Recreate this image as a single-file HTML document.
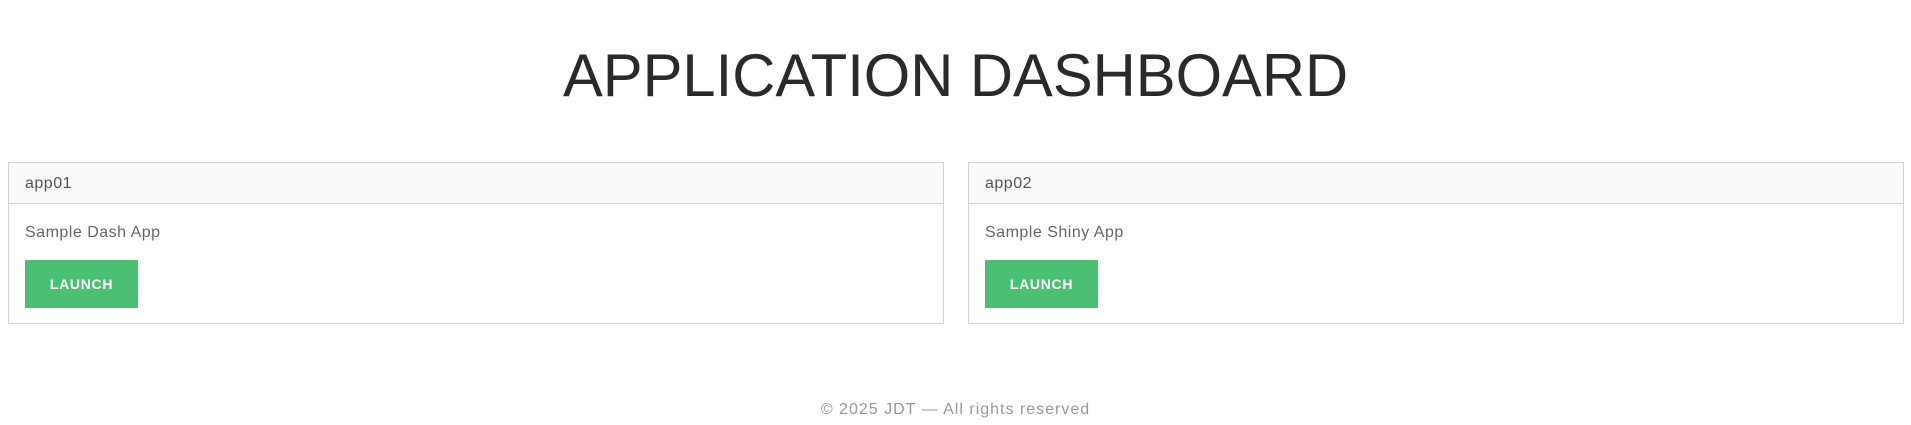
<!DOCTYPE html>
<html><head><meta charset="utf-8"><style>
body{margin:0;width:1911px;height:425px;background:#fff;font-family:"Liberation Sans",sans-serif;position:relative;overflow:hidden}
h1{position:absolute;left:0;width:1911px;top:46px;margin:0;text-align:center;font-weight:normal;font-size:60px;line-height:60px;color:#2a2a2a;}
h1 span{display:inline-block;transform:scaleX(0.995);letter-spacing:0px}
.card{position:absolute;top:162px;height:160px;border:1px solid #d3d3d3;background:#fff}
.hd{height:40px;border-bottom:1px solid #d3d3d3;background:#f9f9f9;color:#555;font-size:16px;line-height:42px;padding-left:16px;letter-spacing:.5px}
.bd{color:#666;font-size:16px;padding-left:16px;letter-spacing:.5px}
.bd p{margin:0;position:absolute;top:61px;left:16px}
.btn{position:absolute;left:16px;top:97px;width:113px;height:48px;background:#4bc074;color:#fff;font-weight:bold;font-size:14px;line-height:48px;text-align:center;letter-spacing:.7px}
.ft{position:absolute;top:401px;left:0;width:1911px;text-align:center;color:#999;font-size:16px;letter-spacing:1px}
</style></head><body>
<h1><span>APPLICATION DASHBOARD</span></h1>
<div class="card" style="left:8px;width:934px"><div class="hd">app01</div><div class="bd"><p>Sample Dash App</p><div class="btn">LAUNCH</div></div></div>
<div class="card" style="left:968px;width:934px"><div class="hd">app02</div><div class="bd"><p>Sample Shiny App</p><div class="btn">LAUNCH</div></div></div>
<div class="ft">© 2025 JDT — All rights reserved</div>
</body></html>
